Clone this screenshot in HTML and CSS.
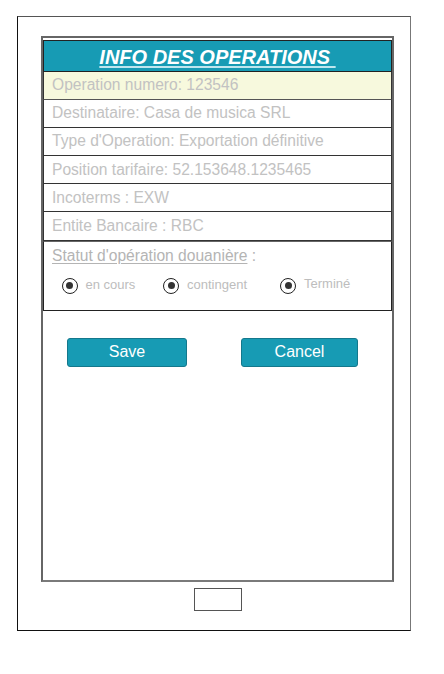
FILE: index.html
```html
<!DOCTYPE html>
<html lang="fr">
<head>
<meta charset="utf-8">
<title>Info des operations</title>
<link rel="stylesheet" href="styles.css">
</head>
<body>
<div class="device">
  <div class="screen">
    <div class="header"><span class="title">INFO DES OPERATIONS&nbsp;</span></div>
    <div class="row row-highlight">Operation numero: 123546</div>
    <div class="row">Destinataire: Casa de musica SRL</div>
    <div class="row">Type d'Operation: Exportation définitive</div>
    <div class="row">Position tarifaire: 52.153648.1235465</div>
    <div class="row">Incoterms : EXW</div>
    <div class="row">Entite Bancaire : RBC</div>
    <div class="status">
      <div class="status-label"><span class="status-link">Statut d'opération douanière</span> :</div>
      <div class="options">
        <div class="opt"><span class="radio"></span><span class="opt-label">en cours</span></div>
        <div class="opt"><span class="radio"></span><span class="opt-label">contingent</span></div>
        <div class="opt"><span class="radio"></span><span class="opt-label opt-label-up">Terminé</span></div>
      </div>
    </div>
    <div class="actions">
      <button class="btn btn-save">Save</button>
      <button class="btn btn-cancel">Cancel</button>
    </div>
  </div>
  <div class="home-wrap"><div class="home"></div></div>
</div>
</body>
</html>
```

FILE: styles.css
```css
* { box-sizing: border-box; }
html, body { margin: 0; padding: 0; background: #fff; }
body { font-family: "Liberation Sans", Arial, sans-serif; }

.device {
  margin: 16px 0 0 17px;
  width: 394px;
  height: 615px;
  border: 1.5px solid #111;
  border-top-color: #555;
  border-right-color: #777;
  padding-top: 19px;
}

.screen {
  margin-left: 23px;
  width: 353px;
  height: 546px;
  border: 2px solid #666;
  border-bottom-color: #7a7a7a;
  display: flex;
  flex-direction: column;
}

.header {
  margin-top: 2px;
  height: 31.5px;
  background: #179bb4;
  border: 1.5px solid #222;
  display: flex;
  align-items: center;
  justify-content: center;
}
.title {
  color: #fff;
  font-weight: bold;
  font-style: italic;
  font-size: 20px;
  text-decoration: underline;
  text-decoration-color: #bfe6ee;
  text-underline-offset: 2px;
  line-height: 1;
  position: relative;
  top: 1px;
}

.row {
  height: 28.2px;
  border: 1.5px solid #333;
  border-top: none;
  padding-left: 8px;
  color: #c2c2c2;
  font-size: 15.6px;
  display: flex;
  align-items: center;
}
.row-highlight { background: #f7f9dd; border-bottom-color: #555; }

.status {
  height: 70px;
  border: 1.5px solid #222;
  border-top: 1px solid #666;
  color: #c2c2c2;
}
.status-label {
  font-size: 15.6px;
  height: 27px;
  padding: 5px 0 0 8px;
  color: #b4b4b4;
}
.status-link { text-decoration: underline; text-underline-offset: 2px; }

.options {
  display: grid;
  grid-template-columns: 101.5px 117px auto;
  padding-left: 17.5px;
  margin-top: 9px;
}
.opt { display: flex; align-items: center; }
.radio {
  width: 16px;
  height: 16px;
  border: 1.5px solid #222;
  border-radius: 50%;
  display: flex;
  align-items: center;
  justify-content: center;
  flex: none;
}
.radio::after {
  content: "";
  width: 7px;
  height: 7px;
  border-radius: 50%;
  background: #333;
}
.opt-label {
  font-size: 13px;
  margin-left: 8px;
  position: relative;
  top: -1.5px;
  color: #bdbdbd;
}
.opt-label-up { top: -2.5px; }

.actions {
  display: flex;
  padding: 27px 0 0 24px;
  gap: 54px;
}
.btn {
  height: 29px;
  background: #179bb4;
  border: 1px solid #14788c;
  border-radius: 3px;
  color: #fff;
  font-family: "Liberation Sans", Arial, sans-serif;
  font-size: 16px;
  padding: 0;
}
.btn-save { width: 120px; }
.btn-cancel { width: 117px; }

.home-wrap {
  margin-left: 23px;
  width: 353px;
  display: flex;
  justify-content: center;
  padding-top: 5.5px;
}
.home {
  width: 48px;
  height: 23px;
  border: 1.5px solid #555;
  background: #fff;
}
```
